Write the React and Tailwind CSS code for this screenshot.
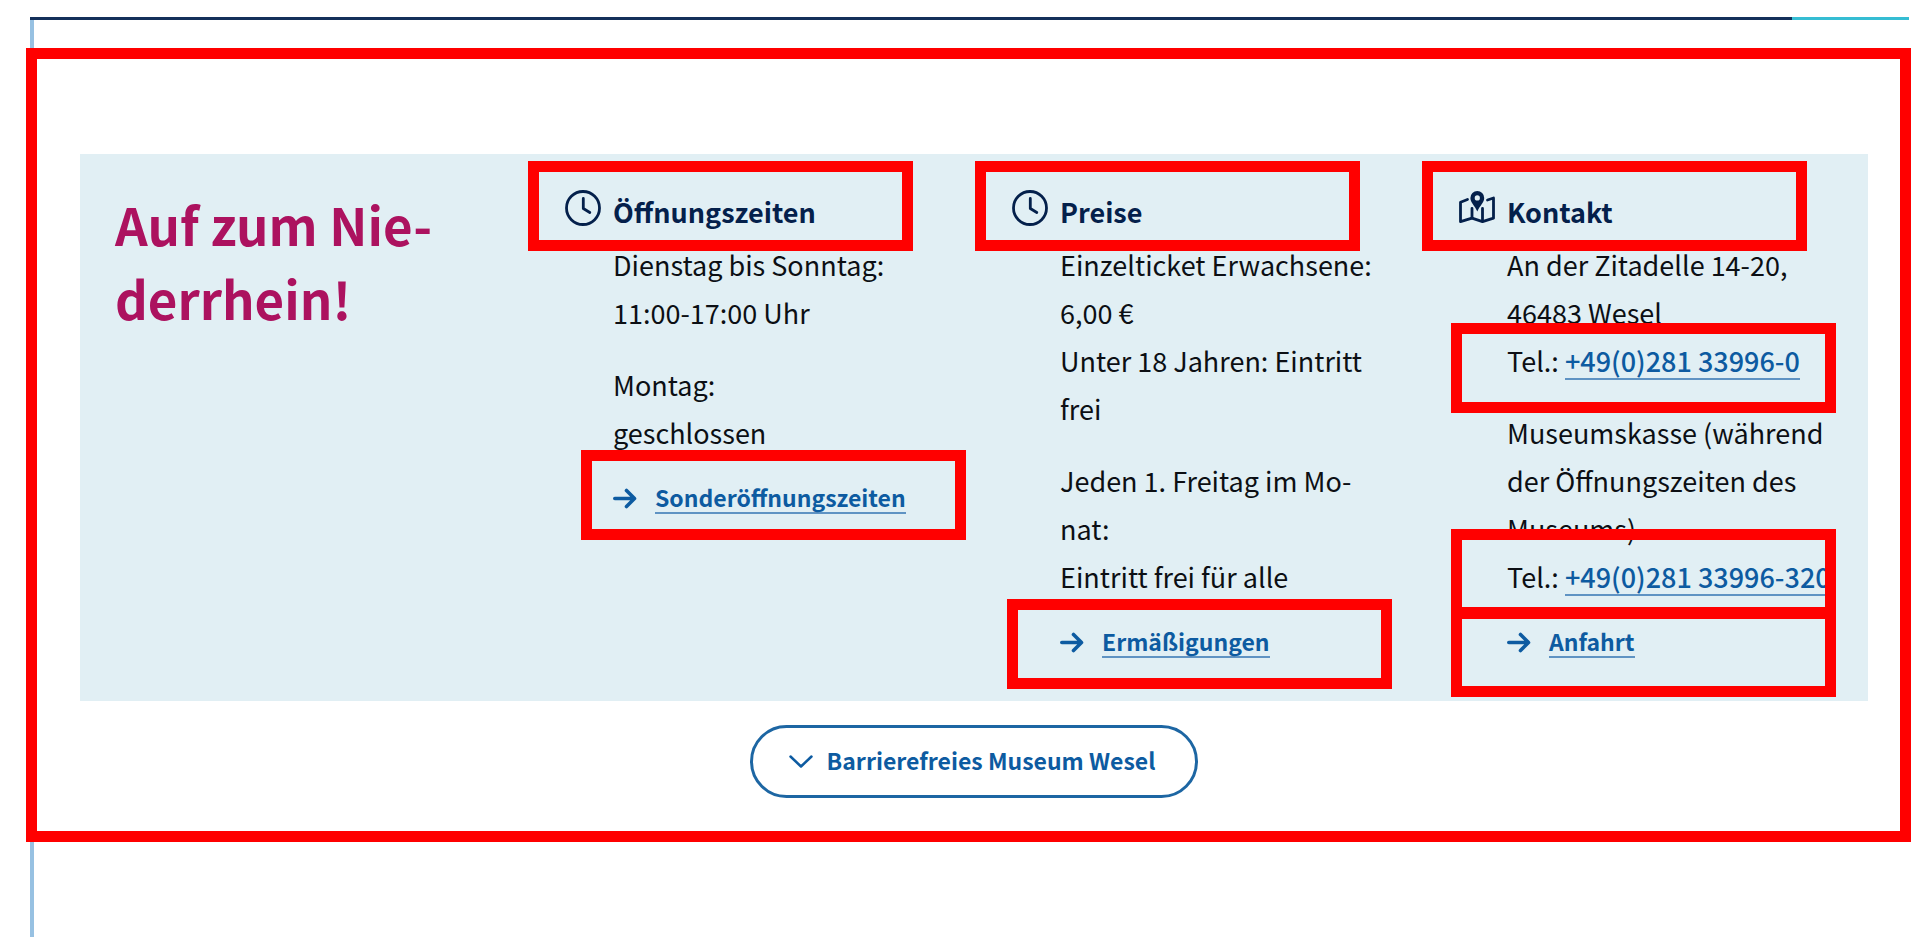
function ClockIcon() {
  return (
    <svg viewBox="0 0 36 36" className="size-9" fill="none" stroke="currentColor" strokeWidth="2.8" strokeLinecap="round" strokeLinejoin="round" aria-hidden="true">
      <circle cx="18" cy="18" r="16.5" />
      <path d="M18.300 8.500v10l6.500 4" />
    </svg>
  );
}

function MapIcon() {
  return (
    <svg viewBox="0 0 36 36" className="size-9" fill="none" stroke="currentColor" strokeWidth="2.8" strokeLinecap="round" strokeLinejoin="round" aria-hidden="true">
      <path d="M8.500 9.500 1.500 12.200v19.500l11.500-3.500 10.500 3.500 11-3.500V8L28.500 10" />
      <path d="M13 18.500v9.500M23.500 18.500v12.500" />
      <path fillRule="evenodd" fill="currentColor" stroke="none" d="M18.300 1a6.900 6.900 0 0 0-6.900 6.900c0 4.800 4.500 7.600 6.900 13.600 2.400-6 6.900-8.800 6.900-13.600A6.900 6.900 0 0 0 18.300 1zm0 4.300a2.600 2.600 0 1 1 0 5.200 2.600 2.600 0 0 1 0-5.200z" />
    </svg>
  );
}

function ArrowIcon() {
  return (
    <svg viewBox="0 0 24 24" className="size-6 shrink-0" fill="none" stroke="currentColor" strokeWidth="3.6" strokeLinecap="round" strokeLinejoin="round" aria-hidden="true">
      <path d="M1.800 12.500h19.500M13.500 4.500l8 8-8 8" />
    </svg>
  );
}

function Marker({ className }) {
  return (
    <span
      aria-hidden="true"
      className={`pointer-events-none absolute z-10 h-[90px] w-[385px] border-[11px] border-[#ff0000] ${className}`}
    />
  );
}

function InfoColumn({ icon, title, children, link, linkMarker }) {
  return (
    <section className="flex flex-col">
      <div className="relative flex h-[87px] items-center gap-3 pl-[38px] pt-[21px] text-[#04204b]">
        {icon}
        <h3 className="pt-2 text-[27px] leading-[48px] font-bold">{title}</h3>
        <Marker className="left-px top-[7px]" />
      </div>
      <div className="pl-[86px] pr-[34px]">
        <div className="flex flex-col gap-6 text-[27px] leading-[48px]">{children}</div>
        <div className="relative mt-[17px] flex h-12 items-center gap-[18px] text-[#0d5ba1]">
          <ArrowIcon />
          <a href="#" className="border-b-2 border-[#5f93c3] text-[23px] leading-[30px] font-bold">
            {link}
          </a>
          <Marker className={linkMarker} />
        </div>
      </div>
    </section>
  );
}

function Phone({ children, marker }) {
  return (
    <span className="relative block whitespace-nowrap">
      Tel.:{" "}
      <a href="#" className="inline-block border-b-2 border-[#5f93c3] leading-[34px] font-medium text-[#0d5ba1]">
        {children}
      </a>
      <Marker className={marker} />
    </span>
  );
}

export default function App() {
  return (
    <div lang="de" className="min-h-screen bg-white pl-[30px] pr-[11px] pt-[17px] font-['Noto_Sans_CJK_SC',sans-serif] text-[#0c0f14]">
      <div className="flex h-[3px]">
        <div className="grow bg-[#14305a]" />
        <div className="w-[117px] bg-[#35bdd3]" />
      </div>
      <div className="min-h-[917px] border-l-4 border-[#97c1e2] pt-7">
        <main className="-ml-2 -mr-0.5 border-[11px] border-[#ff0000] bg-white pb-[33px] pl-[43px] pr-8 pt-[95px]">
          <div className="grid grid-cols-4 bg-[#e1eff4] pb-[35px]">
            <h2 className="pl-[35px] pr-8 pt-[33px] text-[51px] leading-[74px] font-bold text-[#ac125f]">
              Auf zum Nie-
              <wbr />
              derrhein!
            </h2>
            <InfoColumn
              icon={<ClockIcon />}
              title="Öffnungszeiten"
              link="Sonderöffnungszeiten"
              linkMarker="-left-8 -top-6"
            >
              <p>
                Dienstag bis Sonntag:
                <br />
                11:00-17:00 Uhr
              </p>
              <p>
                Montag:
                <br />
                geschlossen
              </p>
            </InfoColumn>
            <InfoColumn
              icon={<ClockIcon />}
              title="Preise"
              link="Ermäßigungen"
              linkMarker="-left-[53px] -top-[19px]"
            >
              <p>
                Einzelticket Erwachsene: 6,00&nbsp;€
                <br />
                Unter 18 Jahren: Eintritt frei
              </p>
              <p>
                Jeden 1. Freitag im Mo-
                <br />
                nat:
                <br />
                Eintritt frei für alle
              </p>
            </InfoColumn>
            <InfoColumn
              icon={<MapIcon />}
              title="Kontakt"
              link="Anfahrt"
              linkMarker="-left-14 -top-[11px]"
            >
              <p>
                An der Zitadelle 14-20, 46483 Wesel
                <Phone marker="-left-14 -top-3.5">+49(0)281 33996-0</Phone>
              </p>
              <p>
                Museumskasse (während der Öffnungszeiten des Museums)
                <Phone marker="-left-14 -top-6">+49(0)281 33996-320</Phone>
              </p>
            </InfoColumn>
          </div>
          <div className="mt-6 flex justify-center">
            <button type="button" className="flex h-[73px] items-center gap-3.5 rounded-full border-[3px] border-[#1d66a3] pb-0.5 pl-9 pr-10 text-[23px] font-bold text-[#0d5ba1]">
              <svg viewBox="0 0 24 24" className="size-6" fill="none" stroke="currentColor" strokeWidth="2.500" strokeLinecap="round" strokeLinejoin="round" aria-hidden="true">
                <path d="M1.500 7.500 12 17.500l10.500-10" />
              </svg>
              Barrierefreies Museum Wesel
            </button>
          </div>
        </main>
      </div>
    </div>
  );
}
